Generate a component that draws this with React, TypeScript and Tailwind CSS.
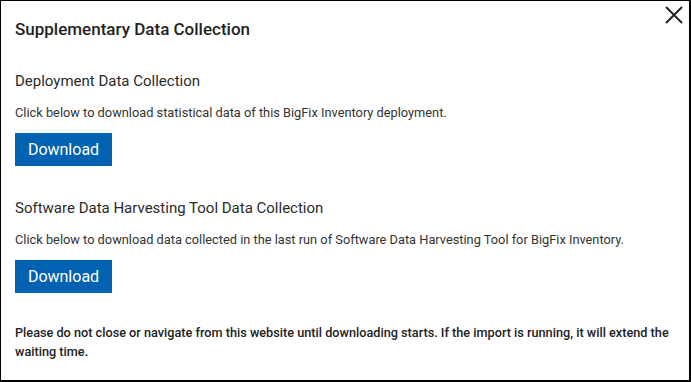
const Section = ({ title, text }: { title: string; text: string }) => {
  return (
    <div className="flex flex-col">
      <h3 className="text-[15px] leading-[20px] text-[#2b2b2b]">{title}</h3>
      <p className="mt-[14px] text-[12.8px] leading-[16px] text-[#333333]">{text}</p>
      <button className="mt-[12px] w-[97px] h-[33px] bg-[#0062b1] text-white text-[16px] leading-[20px] flex items-center justify-center">
        Download
      </button>
    </div>
  );
};

export default function App() {
  return (
    <div
      className="relative w-[691px] h-[382px] bg-white border-l border-t border-r-2 border-b-2 border-black overflow-hidden"
      style={{ fontFamily: "Roboto, 'Liberation Sans', sans-serif" }}
    >
      <button className="absolute right-[4px] top-[3px] text-[#222]" aria-label="Close">
        <svg width="22" height="22" viewBox="0 0 22 22" fill="none" stroke="currentColor" strokeWidth="2">
          <path d="M3 3 L19 19 M19 3 L3 19" />
        </svg>
      </button>
      <div className="flex flex-col px-[14px] pt-[17px]">
        <h2 className="text-[17px] leading-[22px] font-medium text-[#1f1f1f]">Supplementary Data Collection</h2>
        <div className="mt-[31px]">
          <Section
            title="Deployment Data Collection"
            text="Click below to download statistical data of this BigFix Inventory deployment."
          />
        </div>
        <div className="mt-[32px]">
          <Section
            title="Software Data Harvesting Tool Data Collection"
            text="Click below to download data collected in the last run of Software Data Harvesting Tool for BigFix Inventory."
          />
        </div>
        <p className="mt-[30px] text-[12.7px] leading-[19px] font-medium text-[#222] pr-[6px]">
          Please do not close or navigate from this website until downloading starts. If the import is running, it will extend the waiting time.
        </p>
      </div>
    </div>
  );
}
